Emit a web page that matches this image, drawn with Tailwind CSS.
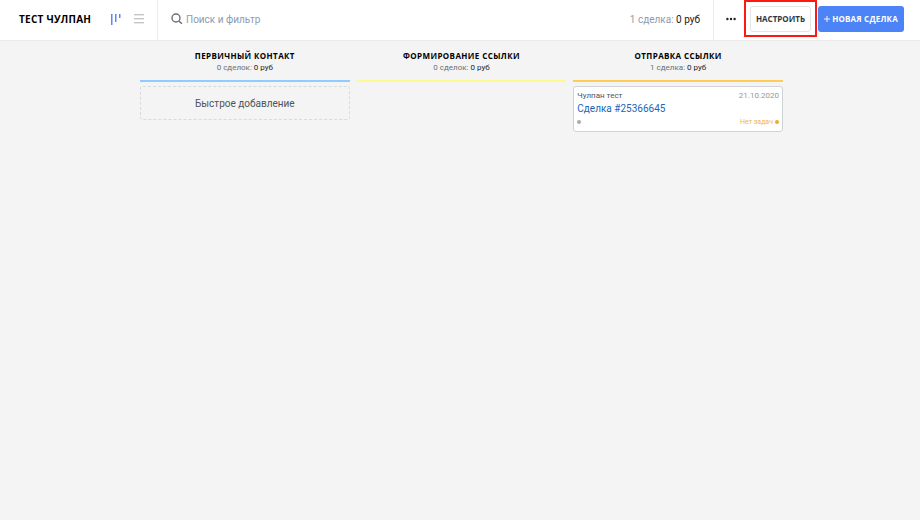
<!DOCTYPE html>
<html lang="ru">
<head>
    <meta charset="UTF-8">
    <meta name="viewport" content="width=device-width, initial-scale=1.0">
    <title>Тест Чулпан</title>
    <script src="https://cdn.jsdelivr.net/npm/@tailwindcss/browser@4"></script>
</head>
<body class="bg-[#f4f4f4] font-['Roboto','Noto_Sans',sans-serif] text-[#2e3640] min-h-screen">
    <header class="flex h-[41px] bg-white border-b border-[#ebebeb]">
        <div class="flex items-center w-[158px] shrink-0 pl-[19px] pr-[13px] pb-[2px] border-r border-[#ececec]">
            <h1 class="font-['Open_Sans'] text-[10px] font-bold tracking-wide text-black whitespace-nowrap">ТЕСТ ЧУЛПАН</h1>
            <button class="ml-auto" aria-label="Воронка">
                <svg class="block" width="10" height="12" viewBox="0 0 10 12" fill="#5c88f5">
                    <rect x="0" y="1" width="1.5" height="11"/>
                    <rect x="4" y="1" width="1.5" height="8"/>
                    <rect x="8" y="1" width="1.5" height="4"/>
                </svg>
            </button>
            <button class="ml-[13px]" aria-label="Список">
                <svg class="block" width="10" height="12" viewBox="0 0 10 12" fill="#c6c6c6">
                    <rect x="0" y="1" width="10" height="1.4"/>
                    <rect x="0" y="5" width="10" height="1.4"/>
                    <rect x="0" y="9" width="10" height="1.4"/>
                </svg>
            </button>
        </div>
        <div class="flex flex-1 items-center px-[13px] pb-[2px] text-[10px]">
            <svg class="shrink-0" width="12" height="12" viewBox="0 0 12 12" fill="none" stroke="#6b7077" stroke-width="1.4">
                <circle cx="5" cy="5" r="4"/>
                <path d="M8.2 8.4L11 10.8"/>
            </svg>
            <input type="text" aria-label="Поиск и фильтр" placeholder="Поиск и фильтр" class="flex-1 min-w-0 ml-[3px] outline-none placeholder:text-[#8f9ab0]">
            <p class="whitespace-nowrap text-[#8f9ab0]">1 сделка: <span class="text-[#1a1a1a]">0 руб</span></p>
        </div>
        <div class="flex items-start border-l border-[#ececec] pr-4">
            <button class="flex items-center h-[38px] px-[12px]" aria-label="Ещё">
                <svg class="block" width="10" height="4" viewBox="0 0 10 4" fill="#222">
                    <circle cx="1.4" cy="2" r="1.2"/>
                    <circle cx="5" cy="2" r="1.2"/>
                    <circle cx="8.6" cy="2" r="1.2"/>
                </svg>
            </button>
            <div class="ml-[-4px] w-[73px] h-[37px] border-2 border-[#fb1a10] p-[4px]">
                <button class="block w-full h-[26px] rounded-[3px] border border-[#e3e4e6] text-center font-['Open_Sans'] text-[8px] font-bold whitespace-nowrap">НАСТРОИТЬ</button>
            </div>
            <button class="mt-[6px] ml-[1px] w-[86px] h-[26px] flex items-center justify-center gap-[2px] rounded-[3px] bg-[#4c83f6] font-['Open_Sans'] text-[8px] font-bold tracking-wide text-white whitespace-nowrap">
                <svg width="6" height="6" viewBox="0 0 6 6" stroke="#fff" stroke-width="0.9">
                    <path d="M3 0V6M0 3H6"/>
                </svg>
                НОВАЯ СДЕЛКА
            </button>
        </div>
    </header>

    <main class="grid grid-cols-3 gap-[7px] pl-[140px] pr-[137px] pt-[8px]">
        <section>
            <div class="h-[33px] border-b-2 border-[#92cbff] text-center whitespace-nowrap">
                <h2 class="font-['Open_Sans'] text-[8px] leading-[13px] font-bold tracking-wider text-black">ПЕРВИЧНЫЙ КОНТАКТ</h2>
                <p class="text-[8px] leading-[12px] text-[#6b7078]">0 сделок: <span class="text-[#222]">0 руб</span></p>
            </div>
            <button class="block mt-[4px] w-full h-[34px] rounded-[3px] border border-dashed border-[#d8dadc] text-[10px] text-[#4c545e]">Быстрое добавление</button>
        </section>
        <section>
            <div class="h-[33px] border-b-2 border-[#fdfb8e] text-center whitespace-nowrap">
                <h2 class="font-['Open_Sans'] text-[8px] leading-[13px] font-bold tracking-wider text-black">ФОРМИРОВАНИЕ ССЫЛКИ</h2>
                <p class="text-[8px] leading-[12px] text-[#6b7078]">0 сделок: <span class="text-[#222]">0 руб</span></p>
            </div>
        </section>
        <section>
            <div class="h-[33px] border-b-2 border-[#ffcd55] text-center whitespace-nowrap">
                <h2 class="font-['Open_Sans'] text-[8px] leading-[13px] font-bold tracking-wider text-black">ОТПРАВКА ССЫЛКИ</h2>
                <p class="text-[8px] leading-[12px] text-[#6b7078]">1 сделка: <span class="text-[#222]">0 руб</span></p>
            </div>
            <article class="mt-[4px] rounded-[3px] border border-[#d0d3d6] bg-white px-[3px] pt-[3px] pb-[2px]">
                <div class="flex justify-between text-[8px] leading-[12px]">
                    <span class="text-[#4c545e]">Чулпан тест</span>
                    <time class="text-[#92989b]">21.10.2020</time>
                </div>
                <a href="#" class="block text-[10px] leading-[13px] text-[#2065b5]">Сделка #25366645</a>
                <div class="flex items-center justify-between h-[14px] text-[7px] leading-[12px] text-[#f0b542]">
                    <span class="size-[4px] rounded-full bg-[#abacae]"></span>
                    <span class="flex items-center gap-[2px]">Нет задач <span class="size-[4px] rounded-full bg-[#f3a92c]"></span></span>
                </div>
            </article>
        </section>
    </main>
</body>
</html>
